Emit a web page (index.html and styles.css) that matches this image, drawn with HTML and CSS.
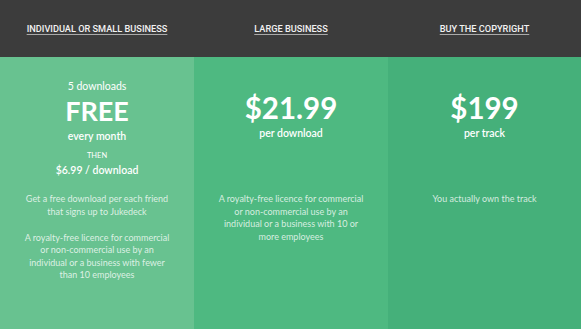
FILE: index.html
```html
<!DOCTYPE html>
<html>
<head>
<meta charset="utf-8">
<link rel="stylesheet" href="styles.css">
</head>
<body>
<div class="pricing">
  <div class="col c1">
    <div class="head"><a>INDIVIDUAL OR SMALL BUSINESS</a></div>
    <div class="body">
      <div class="top">
        <div class="pre">5 downloads</div>
        <div class="big free">FREE</div>
        <div class="sub">every month</div>
        <div class="then">THEN</div>
        <div class="sub">$6.99 / download</div>
      </div>
      <p class="desc">Get a free download per each friend<br>that signs up to Jukedeck</p>
      <p class="desc">A royalty-free licence for commercial<br>or non-commercial use by an<br>individual or a business with fewer<br>than 10 employees</p>
    </div>
  </div>
  <div class="col c2">
    <div class="head"><a>LARGE BUSINESS</a></div>
    <div class="body">
      <div class="top">
        <div class="big price">$21.99</div>
        <div class="sub">per download</div>
      </div>
      <p class="desc">A royalty-free licence for commercial<br>or non-commercial use by an<br>individual or a business with 10 or<br>more employees</p>
    </div>
  </div>
  <div class="col c3">
    <div class="head"><a>BUY THE COPYRIGHT</a></div>
    <div class="body">
      <div class="top">
        <div class="big price">$199</div>
        <div class="sub">per track</div>
      </div>
      <p class="desc">You actually own the track</p>
    </div>
  </div>
</div>
</body>
</html>
```
FILE: styles.css
```css
html, body { margin: 0; padding: 0; }
body { width: 581px; height: 329px; overflow: hidden; font-family: "Lato", "Open Sans", sans-serif; color: #fff; }
.pricing { display: grid; grid-template-columns: 194px 194px 193px; height: 329px; }
.col { display: flex; flex-direction: column; }
.head { height: 57px; background: #3c3c3c; display: flex; align-items: center; justify-content: center; box-sizing: border-box; }
.head a { font-family: "Roboto", sans-serif; font-weight: 500; font-size: 9.2px; color: #f2f2f2; text-decoration: underline; text-decoration-color: #aaa; text-underline-offset: 2px; }
.body { flex: 1; text-align: center; }
.c1 .body { background: #68c290; }
.c2 .body { background: #4eb981; }
.c3 .body { background: #45b07a; }
.top { height: 136px; box-sizing: border-box; }
.c1 .top { padding-top: 22px; }
.c2 .top, .c3 .top { padding-top: 33px; }
.pre { font-size: 10.5px; line-height: 14px; }
.big { font-weight: 700; line-height: 36px; }
.free { font-size: 27px; }
.price { font-size: 29.5px; }
.sub { font-size: 10.5px; line-height: 14px; font-weight: 600; }
.then { font-size: 7.5px; margin-top: 8px; line-height: 10px; margin-bottom: 2px; }
.desc { margin: 0 0 13.5px; font-size: 9px; line-height: 12.6px; color: rgba(255,255,255,0.78); }
```
